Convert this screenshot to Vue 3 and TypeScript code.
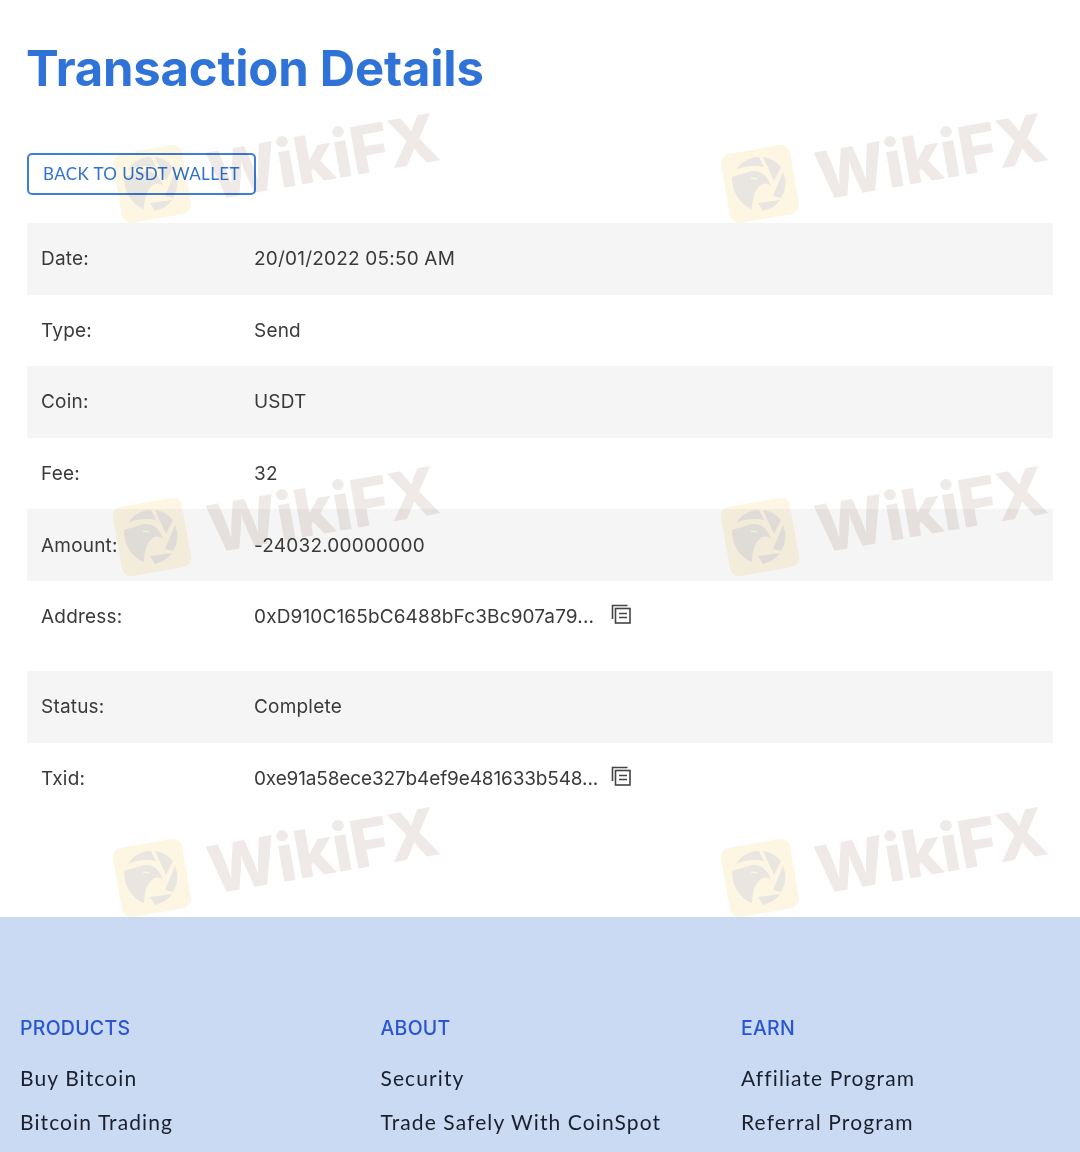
<script setup lang="ts">
interface Row {
  label: string
  value: string
  hash?: 'wide' | 'tight'
}
const rows: Row[] = [
  { label: 'Date:', value: '20/01/2022 05:50 AM' },
  { label: 'Type:', value: 'Send' },
  { label: 'Coin:', value: 'USDT' },
  { label: 'Fee:', value: '32' },
  { label: 'Amount:', value: '-24032.00000000' },
  { label: 'Address:', value: '0xD910C165bC6488bFc3Bc907a79...', hash: 'wide' },
  { label: 'Status:', value: 'Complete' },
  { label: 'Txid:', value: '0xe91a58ece327b4ef9e481633b548...', hash: 'tight' }
]
const footer = [
  { title: 'PRODUCTS', links: ['Buy Bitcoin', 'Bitcoin Trading'] },
  { title: 'ABOUT', links: ['Security', 'Trade Safely With CoinSpot'] },
  { title: 'EARN', links: ['Affiliate Program', 'Referral Program'] }
]
const marks = [
  { x: 112, y: 106 },
  { x: 720, y: 106 },
  { x: 112, y: 459 },
  { x: 720, y: 459 },
  { x: 112, y: 800 },
  { x: 720, y: 800 }
]
</script>

<template>
  <div class="page">
    <main class="content">
      <h1 class="title">Transaction Details</h1>
      <a class="back">BACK TO USDT WALLET</a>
      <div class="table">
        <div v-for="row in rows" :key="row.label" class="row" :class="{ tall: row.label === 'Address:' }">
          <div class="label">{{ row.label }}</div>
          <div class="value">
            <span :class="row.hash">{{ row.value }}</span>
            <svg v-if="row.hash" class="copy" viewBox="0 0 20 20" width="20" height="20" fill="none" stroke="#444" stroke-width="1.6">
              <path d="M1.5 15V1.5h15" />
              <rect x="4.5" y="4.5" width="14.5" height="14.5" />
              <path d="M8 9.5h8M8 13.5h8" />
            </svg>
          </div>
        </div>
      </div>
    </main>
    <footer class="footer">
      <div v-for="col in footer" :key="col.title" class="col">
        <h4 class="col-title">{{ col.title }}</h4>
        <a v-for="link in col.links" :key="link" class="link">{{ link }}</a>
      </div>
    </footer>
    <div v-for="m in marks" :key="m.x + '-' + m.y" class="mark" :style="{ left: m.x + 'px', top: m.y + 'px' }">
      <svg class="mark-logo" viewBox="0 0 82 82" width="82" height="82">
        <rect x="6" y="6" width="70" height="70" rx="9" fill="#fdf6e3" transform="rotate(-10 41 41)" />
        <g fill="#e9e5e1">
          <path d="M17 27 A28 28 0 0 1 40 14 L45 24 C35 22 25 23 17 27Z" />
          <path d="M44 14 A28 28 0 0 1 62 24 L55 38 Z" />
          <path d="M64 29 A28 28 0 0 1 62 55 L54 53 Z" />
          <path d="M39 60 L61 57 A28 28 0 0 1 44 68 Z" />
          <path d="M13 34 L33 28 C42 27 49 33 52 43 C48 40 45 40 42 42 C36 46 33 55 33 66 C22 62 13 50 13 34Z" />
        </g>
        <path d="M32 35 L38 36" stroke="#fdf6e3" stroke-width="1.4" />
      </svg>
      <span class="mark-text">WikiFX</span>
    </div>
  </div>
</template>

<style scoped>
.page {
  position: relative;
  width: 1080px;
  height: 1152px;
  overflow: hidden;
  background: #fff;
  font-family: Inter, "Liberation Sans", sans-serif;
  color: #3a3a3a;
}
.content {
  height: 917px;
  box-sizing: border-box;
  padding: 39px 27px 0;
}
.title {
  margin: 0 0 0 -1px;
  font-size: 49px;
  line-height: 60px;
  font-weight: 700;
  letter-spacing: -0.2px;
  color: #2f72d8;
}
.back {
  display: inline-block;
  box-sizing: border-box;
  margin-top: 54px;
  width: 229px;
  height: 42px;
  line-height: 38px;
  border: 2px solid #3f7ddb;
  border-radius: 5px;
  text-align: center;
  color: #2f72d8;
  font-size: 17px;
  font-family: Lato, sans-serif;
  letter-spacing: 0.4px;
  white-space: nowrap;
}
.table {
  margin-top: 28px;
  width: 1026px;
}
.row {
  display: flex;
  height: 71.6px;
  align-items: center;
  padding-left: 14px;
  font-size: 19px;
  letter-spacing: 0.2px;
}
.row:nth-child(odd) {
  background: #f5f5f5;
}
.row.tall {
  height: 90px;
  align-items: flex-start;
  padding-top: 24px;
  box-sizing: border-box;
}
.label {
  width: 213px;
  flex: none;
}
.value {
  display: flex;
  align-items: center;
}
.wide,
.tight {
  display: inline-block;
  width: 357px;
  white-space: nowrap;
}
.wide {
  letter-spacing: 0.14px;
}
.tight {
  letter-spacing: -0.14px;
}
.copy {
  margin-top: -4px;
}
.footer {
  height: 235px;
  box-sizing: border-box;
  padding: 99px 0 0 20px;
  background: #c9daf2;
  display: flex;
}
.col {
  flex: none;
  width: 360.5px;
  display: flex;
  flex-direction: column;
  align-items: flex-start;
}
.col-title {
  margin: 0 0 16px;
  font-size: 19.5px;
  line-height: 24px;
  font-weight: 500;
  letter-spacing: 0.25px;
  color: #2a55d0;
}
.link {
  font-size: 21px;
  line-height: 44px;
  color: #1a1f2e;
  font-family: Lato, sans-serif;
  letter-spacing: 1.1px;
}
.mark {
  position: absolute;
  width: 340px;
  height: 120px;
  pointer-events: none;
  mix-blend-mode: multiply;
}
.mark-logo {
  position: absolute;
  left: -1px;
  top: 37px;
}
.mark-text {
  position: absolute;
  left: 103px;
  top: 31px;
  font-weight: 800;
  font-size: 66px;
  line-height: 78px;
  letter-spacing: -0.5px;
  color: #efeae7;
  transform: rotate(-10deg);
  transform-origin: left bottom;
}
</style>
